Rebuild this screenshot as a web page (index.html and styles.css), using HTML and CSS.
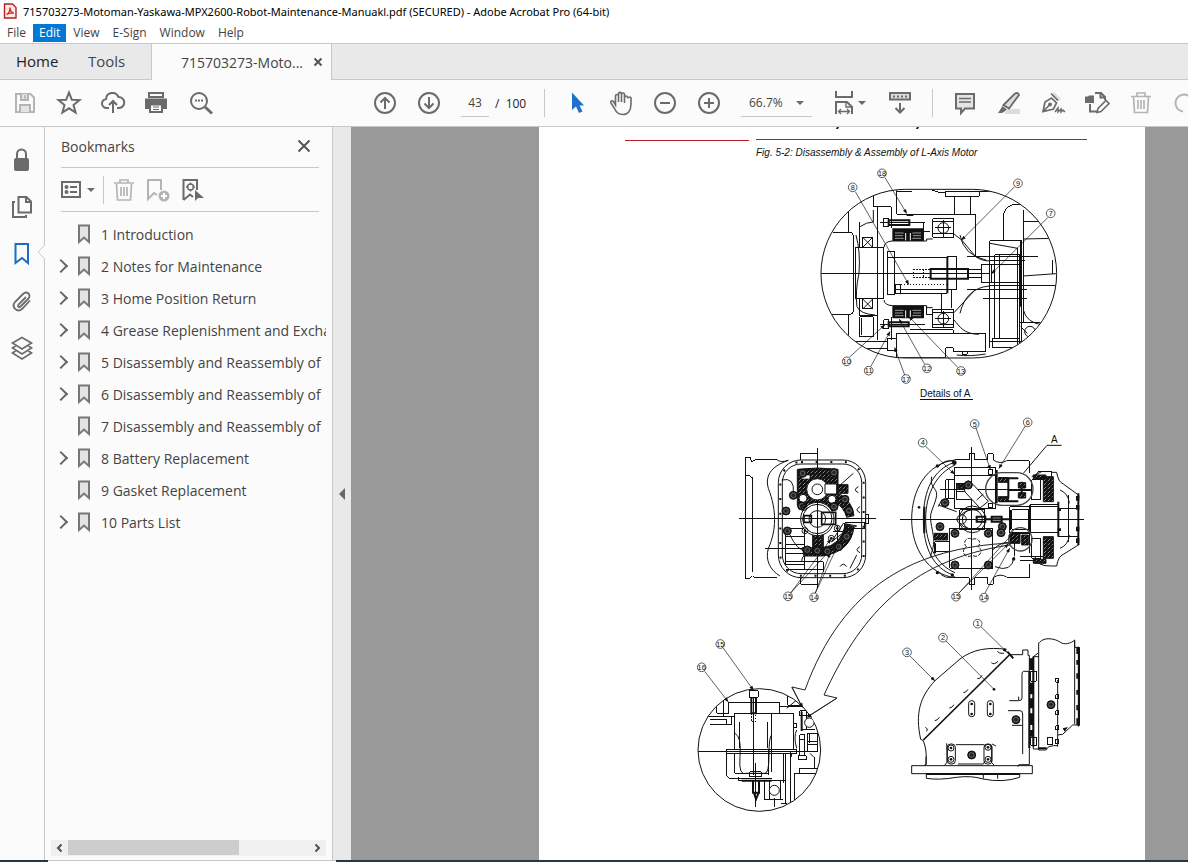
FILE: index.html
```html
<!DOCTYPE html>
<html lang="en">
<head>
<meta charset="utf-8">
<title>715703273-Motoman-Yaskawa-MPX2600-Robot-Maintenance-Manuakl.pdf</title>
<link rel="stylesheet" href="styles.css">
</head>
<body>
<header class="titlebar">
  <svg class="app-icon" viewBox="0 0 14 16" aria-hidden="true"><path d="M1.500 1h8L13 4.500V15H1.500z" fill="#fbe9e7" stroke="#b3261e" stroke-width="1.400"/><path d="M3.500 11.500c2-1 3.500-3.500 3.500-7 .2 3 1.500 5 3.800 5.700-2.500-.5-5 .1-7.300 1.300z" fill="none" stroke="#d0342c" stroke-width="1.400"/></svg>
  <span>715703273-Motoman-Yaskawa-MPX2600-Robot-Maintenance-Manuakl.pdf (SECURED) - Adobe Acrobat Pro (64-bit)</span>
</header>
<nav class="menubar">
  <button>File</button><button class="active">Edit</button><button>View</button><button>E-Sign</button><button>Window</button><button>Help</button>
</nav>
<div class="tabs">
  <button class="tab home">Home</button>
  <button class="tab tools">Tools</button>
  <div class="tab-doc"><span>715703273-Moto...</span><button class="tab-close" aria-label="Close tab"><svg viewBox="0 0 10 10"><path d="M1.500 1.500l7 7M8.500 1.500l-7 7"/></svg></button></div>
</div>
<div class="toolbar">
  <div class="group files">
    <button class="tool dim" aria-label="Save"><svg viewBox="-14 -14 28 28"><path d="M-9-9H5.500L9-5.500V9H-9z"/><path d="M-4-9v6h7v-6M-5 9V2H5v7" fill="#e4e4e4"/><path d="M0-8v4" stroke-width="1.500"/></svg></button>
    <button class="tool" aria-label="Star"><svg viewBox="-14 -14 28 28"><path d="M0-10.500L2.800-3.300 10.500-2.900 4.500 2 6.600 9.500 0 5.300-6.600 9.500-4.500 2-10.500-2.900-2.800-3.300z"/></svg></button>
    <button class="tool" aria-label="Upload"><svg viewBox="-14 -14 28 28"><path d="M-4 5h-2a4.500 4.500 0 0 1-1-9 6.500 6.500 0 0 1 12.500-2A5.500 5.500 0 0 1 6 5H4M0 10V-2M-4 2l4-4 4 4"/></svg></button>
    <button class="tool" aria-label="Print"><svg viewBox="-14 -14 28 28"><path d="M-8-10H6v4H-8z"/><path d="M-11-3.500H9V5H6V1H-8v4h-3z" class="solid"/><path d="M-7 1.500H5V9H-7z" fill="#fff"/><path d="M-4 4h6M-4 6.500h6" stroke-width="1.200"/></svg></button>
    <button class="tool" aria-label="Search"><svg viewBox="-14 -14 28 28"><circle cx="-2" cy="-2" r="8"/><path d="M4 4l7 6.500" stroke-width="3"/><path d="M-6-2.500h2M-3-2.500h2M0-2.500h2" stroke-width="2"/></svg></button>
  </div>
  <div class="group">
    <button class="tool" aria-label="Previous page"><svg viewBox="-14 -14 28 28"><circle r="10"/><path d="M0 6V-5M-4.500-.5L0-5l4.500 4.500"/></svg></button>
    <button class="tool" aria-label="Next page"><svg viewBox="-14 -14 28 28"><circle r="10"/><path d="M0-6V5M-4.500.5L0 5 4.500.5"/></svg></button>
    <input class="page-no" value="43" aria-label="Page number"><span class="page-total">/&nbsp; 100</span>
  </div>
  <i class="sep"></i>
  <div class="group">
    <button class="tool" aria-label="Select"><svg viewBox="-14 -14 28 28"><path d="M-5-10.500V7l4-3.500L2 10l3.500-1.500-3-6H7z" style="fill:#1c73c9;stroke:none"/></svg></button>
    <button class="tool" aria-label="Hand"><svg viewBox="-14 -14 28 28"><path stroke-width="1.600" d="M-5.500 2V-7c0-2 3-2 3 0v6-8c0-2.200 3-2.200 3 0v8-7.500c0-2 3-2 3 0V0-5.500c0-2 2.800-2 3 0 0 1 3-2 3.500.5V1c0 7-3.500 10.500-8 10.500S-5 9-6.500 5.500L-10 0c-1-2 1-3 2.500-1.500z"/></svg></button>
    <button class="tool" aria-label="Zoom out"><svg viewBox="-14 -14 28 28"><circle r="10"/><path d="M-5 0H5"/></svg></button>
    <button class="tool" aria-label="Zoom in"><svg viewBox="-14 -14 28 28"><circle r="10"/><path d="M-5 0H5M0-5V5"/></svg></button>
  </div>
  <div class="zoom"><select aria-label="Zoom level"><option>66.7%</option></select><svg class="caret" viewBox="0 0 8 4"><path d="M0 0h8L4 4z"/></svg></div>
  <div class="group">
    <button class="tool fit" aria-label="Fit width"><svg viewBox="-14 -14 28 28"><path d="M-8-12v6H8v-6M-8 11V-1H3l5 5v7"/><path d="M2-1v5h6M-5 8.500H5M-3 6l-2.500 2.500L-3 11M3 6l2.500 2.500L3 11" stroke-width="1.400"/></svg><svg class="caret" viewBox="0 0 8 4"><path d="M0 0h8L4 4z"/></svg></button>
    <button class="tool" aria-label="Scrolling"><svg viewBox="-14 -14 28 28"><path d="M-10-10H10v6.500H-10z" fill="#ddd"/><path d="M-7-6.500H8" stroke-dasharray="2 2"/><path d="M0 0v9M-4.500 5L0 9.500 4.500 5"/></svg></button>
  </div>
  <i class="sep late"></i>
  <div class="group">
    <button class="tool" aria-label="Comment"><svg viewBox="-14 -14 28 28"><path d="M-9-9H9V5.500H0L-4 10V5.500H-9z" fill="#e4e4e4"/><path d="M-6-4.500H6M-6-1H6" stroke-width="1.300"/></svg></button>
    <button class="tool" aria-label="Highlight"><svg viewBox="-14 -14 28 28"><path d="M-1 6h12v5H-5z" style="fill:#ddd;stroke:none"/><path d="M-5.500 2L6-9.500q3-1.500 4 1.500L0 5.500z" fill="#ddd" stroke-width="1.800"/><path d="M-6.500 3l4.500 3.500-2.500 2-2.500 1.500h-4l2-3z" class="solid" stroke="none"/></svg></button>
    <button class="tool" aria-label="Sign"><svg viewBox="-14 -14 28 28"><path d="M1-11l7 7-3 2-6-6z" style="fill:#ddd;stroke:none"/><path d="M-2-9.500L5-2.500M-10 8.500l2-9.500 6.500-4L3.500 0 .5 6zM-10 8.500l6-6" stroke-width="1.700"/><circle cx="-3" cy="1.500" r="1"/><path d="M2 9l3-4v4l3-3v3l2-2 2 2" stroke-width="1.500"/></svg></button>
    <button class="tool" aria-label="Convert"><svg viewBox="-14 -14 28 28"><path d="M-2-10H4L8-6v3M3.500-10v4.500H8M-7 1V8.500H0"/><path d="M-12-6.500h3l1-1h5V0h-9z" class="solid" stroke="none"/><path d="M0 9.500l1-4L9-2.500l3 3-8 8z" fill="#fff" stroke-width="1.600"/></svg></button>
    <button class="tool dim" aria-label="Delete"><svg viewBox="-14 -14 28 28"><path d="M-7.500-6L-6.500 9.500h13L7.500-6M-10-6.500H10M-4-7v-3H4v3M-3-3V6M0-3V6M3-3V6" stroke-width="1.700"/></svg></button>
    <button class="tool dim" aria-label="Rotate"><svg viewBox="-14 -14 28 28"><path d="M5-6A8.500 8.500 0 1 0-2 8.500"/><path d="M3-1h8v-7z" class="solid" stroke="none"/></svg></button>
  </div>
</div>
<main class="work">
  <aside class="rail">
    <button aria-label="Security"><svg viewBox="-14 -14 28 28"><rect x="-8" y="-2" width="15" height="13" rx="2" class="solid" stroke="none"/><path d="M-5-2v-4a4.500 4.500 0 0 1 9 0v4"/></svg></button>
    <button aria-label="Pages"><svg viewBox="-14 -14 28 28"><path d="M-2-10H4.500L9-5.500V5.500H-3.500V-10zM4-10v5h5M-7-5h-2V10H4V8"/></svg></button>
    <button class="on" aria-label="Bookmarks"><svg viewBox="-14 -14 28 28"><path d="M-6.500-10H6V9L0 4-6.500 9z"/></svg></button>
    <button aria-label="Attachments"><svg viewBox="-14 -14 28 28"><path d="M4-4L-3.500 3.500c-1.500 2 .5 3.500 2 2L6-2c4-4-1-9-5-5l-8 8c-4 5 2 11 7 7L8-.5" stroke-width="1.800"/></svg></button>
    <button aria-label="Layers"><svg viewBox="-14 -14 28 28"><path d="M0-10.500L9.500-5 0 1-9.500-5zM-6-2.500L-9.500 0 0 6 9.500 0 6-2.500M-6 2.500L-9.500 5 0 11 9.500 5 6 2.500" stroke-width="1.700"/></svg></button>
    <svg class="pointer" viewBox="0 0 8 14"><path d="M8 0L1 7l7 7"/></svg>
  </aside>
  <section class="panel">
    <div class="panel-head"><h2>Bookmarks</h2><button aria-label="Close panel"><svg viewBox="0 0 14 14"><path d="M1.500 1.500l11 11M12.500 1.500l-11 11"/></svg></button></div>
    <div class="panel-tools">
      <button class="opts" aria-label="Options"><svg viewBox="0 0 20 18"><path d="M1 1h18v15H1z"/><path d="M9 6h7M9 11h7"/><circle cx="5.500" cy="6" r="1"/><circle cx="5.500" cy="11" r="1"/></svg><svg class="caret" viewBox="0 0 8 4"><path d="M0 0h8L4 4z"/></svg></button>
      <i></i>
      <button class="dim" aria-label="Delete bookmark"><svg viewBox="-14 -14 28 28"><path d="M-7.500-6L-6.500 10h13L7.500-6M-10-7H10M-4-7v-3H4v3M-3-3V6M0-3V6M3-3V6" stroke-width="1.700"/></svg></button>
      <button class="dim" aria-label="New bookmark"><svg viewBox="-14 -14 28 28"><path d="M-1 5L-4 3l-6 6V-10H3V0"/><circle cx="6" cy="6" r="5.500" class="solid" stroke="none"/><path d="M6 3v6M3 6h6" style="stroke:#fff"/></svg></button>
      <button aria-label="Find bookmark"><svg viewBox="-14 -14 28 28"><path d="M-8.500 10V-10H5V0M-8.500 10L-2 4.500 1 7"/><circle cx="-1.500" cy="-3" r="3" stroke-width="1.400"/><path d="M-1.500-7.500V-5M-1.500-1V1.500M-6-3h2.500M.5-3H3" stroke-width="1.400"/><path d="M3 0v11l3-3h6z" class="solid" stroke="none"/></svg></button>
    </div>
    <ul class="list">
      <li><span class="tw"></span><svg class="bm" viewBox="0 0 14 20"><path d="M2 1.500h10V18l-5-4.500L2 18z"/></svg><a href="#">1 Introduction</a></li>
      <li><button class="tw" aria-label="Expand"></button><svg class="bm" viewBox="0 0 14 20"><path d="M2 1.500h10V18l-5-4.500L2 18z"/></svg><a href="#">2 Notes for Maintenance</a></li>
      <li><button class="tw" aria-label="Expand"></button><svg class="bm" viewBox="0 0 14 20"><path d="M2 1.500h10V18l-5-4.500L2 18z"/></svg><a href="#">3 Home Position Return</a></li>
      <li><button class="tw" aria-label="Expand"></button><svg class="bm" viewBox="0 0 14 20"><path d="M2 1.500h10V18l-5-4.500L2 18z"/></svg><a href="#">4 Grease Replenishment and Excha</a></li>
      <li><button class="tw" aria-label="Expand"></button><svg class="bm" viewBox="0 0 14 20"><path d="M2 1.500h10V18l-5-4.500L2 18z"/></svg><a href="#">5 Disassembly and Reassembly of</a></li>
      <li><button class="tw" aria-label="Expand"></button><svg class="bm" viewBox="0 0 14 20"><path d="M2 1.500h10V18l-5-4.500L2 18z"/></svg><a href="#">6 Disassembly and Reassembly of</a></li>
      <li><span class="tw"></span><svg class="bm" viewBox="0 0 14 20"><path d="M2 1.500h10V18l-5-4.500L2 18z"/></svg><a href="#">7 Disassembly and Reassembly of</a></li>
      <li><button class="tw" aria-label="Expand"></button><svg class="bm" viewBox="0 0 14 20"><path d="M2 1.500h10V18l-5-4.500L2 18z"/></svg><a href="#">8 Battery Replacement</a></li>
      <li><span class="tw"></span><svg class="bm" viewBox="0 0 14 20"><path d="M2 1.500h10V18l-5-4.500L2 18z"/></svg><a href="#">9 Gasket Replacement</a></li>
      <li><button class="tw" aria-label="Expand"></button><svg class="bm" viewBox="0 0 14 20"><path d="M2 1.500h10V18l-5-4.500L2 18z"/></svg><a href="#">10 Parts List</a></li>
    </ul>
    <div class="hscroll"><svg viewBox="0 0 16 16"><path d="M10 4.500L6.500 8l3.500 3.500"/></svg><div class="track"><div class="thumb"></div></div><svg viewBox="0 0 16 16"><path d="M6 4.500L9.500 8 6 11.500"/></svg></div>
  </section>
  <button class="gutter" aria-label="Collapse panel"><svg viewBox="0 0 6 12"><path d="M6 0v12L0 6z"/></svg></button>
  <div class="canvas">
    <article class="sheet">
      <svg class="drawing" viewBox="539 127 606 733" role="img" aria-label="Disassembly and assembly of L-axis motor">
        <defs>
          <marker id="ar" viewBox="0 0 10 8" refX="9" refY="4" markerWidth="15" markerHeight="11" markerUnits="userSpaceOnUse" orient="auto"><path d="M0 0L10 4 0 8z" fill="#111" stroke="none"/></marker>
          <pattern id="hatch" width="12" height="12" patternUnits="userSpaceOnUse"><rect width="12" height="12" fill="#111"/><path d="M2 10L10 2" stroke="#bbb" stroke-width="2"/></pattern>
          <g id="bolt"><circle r="12" fill="#222"/><circle r="7" fill="none" stroke="#888" stroke-width="2"/><circle r="2" fill="#ccc"/></g>
          <g id="ring"><circle r="9"/><circle r="4" class="k"/></g>
          <g id="bearing"><path class="o" d="M0 0h64v56H0zM0 10h64M0 46h64M32 4v50M8 28h48"/><circle cx="32" cy="28" r="16"/></g>
          <g id="seal"><path d="M0 0h95v38H0z" class="k"/><path d="M8 14h26M8 22h24M8 30h26M60 14h26M62 22h24M60 30h26" stroke="#999"/><path d="M40 14v22M54 14v22" stroke="#fff"/></g>
          <clipPath id="ca"><rect x="34" y="89" width="705" height="504" rx="252"/></clipPath>
          <clipPath id="cb"><circle cx="208" cy="420" r="184"/></clipPath>
        </defs>
        <path class="rule" d="M625 140.500h124M756 139.500h331"/>
        <path class="k" d="M837 127h2l-1 2h-2zM917 127h2l-1 2h-2z"/>
        <text class="caption" x="756" y="156">Fig. 5-2: Disassembly &amp; Assembly of L-Axis Motor</text>

        <g transform="translate(810 160) scale(.333333)">
          <rect x="33" y="88" width="707" height="506" rx="253"/>
          <g clip-path="url(#ca)">
            <path class="o" d="M33 341H540M68 217h52q10 0 10 10v228q0 8-10 8H60M116 100v117M116 463v90M190 90v50h54v65M204 140v400M260 88v75h237v127M260 95h45M222 175h14v26h-14zM210 187h135M406 95h102v14H406zM434 109v54M482 109v54M365 90l22 7h19M508 95h60M158 232h30v30h-30zM138 262h84v155h-84zM158 417h30v30h-30zM150 470h40v60h-40zM155 475v50M150 262v-75M150 417v50h54M232 275h22v130h-22zM232 293h180M254 400h158M254 388h158M412 290h28v100h-28zM258 375h14v25h-14zM395 400v60M424 390v55M474 329h40v24h-40zM514 315h30v52h-30zM470 290h215M470 390h180M536 303h110M536 378h110M540 243h95v320h-8M540 243v320M555 285h75v250h-75zM570 285v250M544 313h90v54h-90zM623 265v300M640 150v340M632 240v160M640 185h90M640 377h98M728 300v41M580 243v-68q0-42 40-42h80M520 415h130M548 535h82v28h-82zM536 545h105M628 488h100M628 488v90M260 520h267v55h-97v-12h-23v31M244 470v70M260 520v80M120 545h113M120 565h113M233 535h26v38h-26zM222 480h14v26h-14zM210 493h135M300 510h130v10M457 575v8h15v-8M300 165h50M340 187v28h20M350 437v28h20M270 592h134"/>
            <path d="M158 232l30 30m0-30l-30 30M158 417l30 30m0-30l-30 30M150 200q20-14 40-14V150M138 225q14 50 9 115-12 55-6 100 10 22 54 25M222 262q2-18 25-19h103v-6h18M222 420q2 16 25 17h103v6h18M432 222l23 18 42 50q18 13 43 13M450 225q10 60 80 76M450 460q18-76 88-82M432 458l63-68M540 250l83 15M640 237l90-2M640 348l98-7M432 480c18 20 28 42 75 43M440 585q40 5 87-3M640 450q10 40 60 45M632 500l20 20"/>
            <circle cx="660" cy="515" r="16"/>
            <path class="b" d="M236 181h62v14h-62zM236 487h60v12h-60zM362 327h112v29H362zM412 290v110M290 165h20M632 300v140"/>
            <path class="o" stroke-dasharray="5 4" d="M254 375h156M310 328h52v26h-52zM340 328v26"/>
            <use href="#bearing" x="368" y="176"/><use href="#bearing" x="368" y="448"/>
            <use href="#seal" x="247" y="205"/><use href="#seal" x="247" y="437"/>
          </g>
          <g class="lead"><path d="M225 53L290 160"/><path d="M136 95L296 373"/><path d="M614 80L455 240"/><path d="M714 172L545 341"/><path d="M118 592L224 495"/><path d="M182 620L240 515"/><path d="M284 645L254 563"/><path d="M344 613L268 478"/><path d="M443 622L297 470"/></g>
          <g class="call"><circle cx="216" cy="40" r="13"/><circle cx="128" cy="82" r="13"/><circle cx="624" cy="70" r="13"/><circle cx="722" cy="160" r="13"/><circle cx="110" cy="604" r="13"/><circle cx="176" cy="632" r="13"/><circle cx="288" cy="657" r="13"/><circle cx="351" cy="625" r="13"/><circle cx="453" cy="633" r="13"/></g>
          <g class="num"><text x="216" y="48">18</text><text x="128" y="90">8</text><text x="624" y="78">9</text><text x="722" y="168">7</text><text x="110" y="612">10</text><text x="176" y="640">11</text><text x="288" y="665">17</text><text x="351" y="633">12</text><text x="453" y="641">13</text></g>
          <text class="label" x="330" y="712">Details of A</text><path class="o" d="M330 718h158"/>
        </g>

        <g transform="translate(730 410) scale(.333333)">
          <path class="o" d="M28 327h410M105 417h120M262 115v420M46 142v363M212 150v-20h50M212 503v20h50M406 313h10v27h-10zM46 142h14l6 14 9-7h66M46 198h14q8 2 8 12v275M46 505h14l8-8 8 6h64M167 355h56v110h-56zM167 380h56M167 405h56M167 430h56M167 455h113M167 480h113M223 340v140M280 455v30"/>
          <path d="M141 149q10 10 34 2C120 170 105 200 115 235c25 65 25 125 0 180-10 35 5 65 35 83"/>
          <rect x="145" y="150" width="262" height="353" rx="68"/><rect x="157" y="162" width="238" height="329" rx="56"/><rect x="151" y="156" width="250" height="341" rx="62" stroke-dasharray="6 38" stroke-width="6"/>
          <path d="M155 210q40-10 35 40M370 190l-45 40M215 455q0-25 30-25M180 375q20 45 50 50M385 230q-18 10 0 18M390 290q-18 10 0 18M390 410q-18 10 0 18M330 470q10-15 20 0M360 475l20-40"/>
          <path fill="url(#hatch)" d="M202 178q60-8 122 0v46h30v26h-28v35l-20 18h-86l-18-18z"/>
          <circle cx="262" cy="238" r="32" class="w"/><path class="w" d="M285 222h35v30h-35z"/><circle cx="262" cy="238" r="16"/><circle cx="219" cy="265" r="12" class="w"/><circle cx="306" cy="268" r="12" class="w"/>
          <path class="w" d="M215 195h25v12h-25zM282 192l18 12" stroke-width="2"/>
          <path fill="url(#hatch)" d="M330 252q38 25 42 65l-22 5q-8-30-34-45zM372 350q-8 75-95 88h-55l-5-25h60q55-5 70-70zM248 355h32v75h-32z"/>
          <circle cx="262" cy="327" r="50" class="w"/><circle cx="262" cy="327" r="44"/><circle cx="262" cy="327" r="25"/><path d="M222 317h22v20h-22zM275 307h42v36h-42z" stroke-width="5"/><path class="o" d="M212 327h120M262 270v130M345 338h60v18h-60zM310 365h40M322 345v70"/>
          <path d="M305 395L340 340l40 8-40 20z"/>
          <use href="#bolt" x="218" y="190"/><use href="#bolt" x="312" y="188"/><use href="#bolt" x="190" y="256"/><use href="#bolt" x="168" y="303"/><use href="#bolt" x="172" y="363"/><use href="#bolt" x="345" y="268"/><use href="#bolt" x="357" y="302"/><use href="#bolt" x="232" y="420"/><use href="#bolt" x="262" y="422"/><use href="#bolt" x="292" y="424"/><use href="#bolt" x="326" y="410"/><use href="#bolt" x="350" y="380"/><use href="#bolt" x="215" y="288"/><use href="#bolt" x="312" y="290"/>
          <use href="#ring" x="322" y="355"/><use href="#ring" x="304" y="385"/><use href="#ring" x="225" y="362"/><use href="#ring" x="222" y="292"/>
          <g class="lead"><path d="M182 549L322 397"/><path d="M182 549L302 388"/><path d="M256 549L300 430"/><path d="M256 549L352 346"/></g>
          <g class="call"><circle cx="174" cy="559" r="13"/><circle cx="252" cy="562" r="13"/></g>
          <g class="num"><text x="174" y="567">15</text><text x="252" y="570">14</text></g>
        </g>

        <g transform="translate(895 410) scale(.333333)">
          <path class="o" d="M15 328h552M230 110v430M178 172h125v125H178zM178 198h125M152 210h26v55h-26zM135 238h270M160 210v55M180 150h43v-18h16v18h40v-18h16v18M335 152h68v38M180 503h43v20h16v-20h40v20h16v-20M335 503h68v-40M185 220h45v50h-45zM185 245h45M280 178h14v16h-14zM280 282h14v12h-14zM345 290h145v78H345zM350 300h52v58h-52zM405 285h85M345 370h60v60M430 185h40v25h-40M490 275v105M493 295h60M493 380h60M522 255v140M165 355h128v120H165zM195 300h75v60h-75zM360 368v70M375 440h70v12h-70M410 210h28v60h-28zM410 385h28v60h-28zM120 395h45v30h-45z"/>
          <path d="M180 150C95 160 50 240 50 328s50 165 130 175M175 158C115 180 85 240 85 328s32 148 90 167M180 165C125 190 92 250 92 328s35 138 88 160M110 200c-8 40 25 30 12 70s-20 40-12 80 10 50-4 90M295 150q20 14 40 2M295 503q20-14 40-2M130 170q20-25 50-15M130 485q20 25 50 15M470 187h15q5 30 20 35l48 35M470 468h15q5-30 20-35l48-30M495 240q25 10 28 40M495 415q25-10 28-40M430 185q-10 10-10 25M420 440q5 30 50 28M130 285l55 20M140 270l-10 20M195 320q15-25 55-20M195 340q15 20 55 18M293 420q30-30 55-20M300 470q50 20 58-30M410 200q30-15 30-15"/>
          <path class="w" d="M205 222l15-10 15 12 45 50-25 20-45-48zM245 270l20-18"/>
          <circle cx="232" cy="328" r="40"/><circle cx="232" cy="328" r="30"/><circle cx="200" cy="328" r="14"/><path d="M232 388c18-8 30 12 16 22 22 10 4 38-16 26-20 12-38-12-18-26-12-12 0-32 18-22z" stroke-dasharray="12 4"/>
          <path class="b" d="M245 320h26v15h-26zM290 320h30v15h-30zM270 328h75M345 300v60M305 180v100M312 205h58M312 274h58M340 240h70M340 205v60M380 215v50M88 290v80M550 250v155M490 275v105M405 285v85M120 400v30"/>
          <path fill="url(#hatch)" d="M445 200h30v75h-30zM445 380h30v65h-30zM370 218h22v16h-22zM370 248h22v16h-22zM345 370h30v30h-30zM380 375h20v30h-20zM310 203h30v14h-30zM310 260h30v14h-30zM188 222h28v14h-28zM415 195h38v12h-38zM415 448h38v12h-38zM118 370h40v20h-40z"/>
          <rect x="272" y="188" width="142" height="98" rx="49" class="lead2"/>
          <use href="#bolt" x="150" y="278"/><use href="#bolt" x="135" y="350"/><use href="#bolt" x="322" y="350"/><use href="#bolt" x="318" y="368"/><use href="#bolt" x="180" y="370"/><use href="#bolt" x="280" y="370"/><use href="#bolt" x="180" y="465"/><use href="#bolt" x="280" y="465"/><use href="#bolt" x="220" y="225"/>
          <g class="k"><circle cx="178" cy="158" r="7"/><circle cx="127" cy="168" r="5"/><circle cx="72" cy="292" r="4"/><circle cx="127" cy="488" r="5"/><circle cx="172" cy="495" r="5"/><circle cx="356" cy="447" r="5"/><path d="M543 258h10v14h-10zM543 285h10v14h-10zM543 350h10v14h-10zM543 385h10v14h-10zM488 295h10v8h-10zM488 355h10v8h-10z"/></g>
          <circle cx="376" cy="388" r="35" class="lead2"/>
          <path d="M500 106h-44L385 190"/>
          <g class="lead"><path d="M92 109L178 192"/><path d="M243 54L286 178"/><path d="M391 48L312 175"/><path d="M192 549L340 402"/><path d="M192 549L352 372"/><path d="M270 549L344 415"/></g>
          <g class="call"><circle cx="83" cy="98" r="13"/><circle cx="239" cy="42" r="13"/><circle cx="398" cy="37" r="13"/><circle cx="183" cy="560" r="13"/><circle cx="267" cy="563" r="13"/></g>
          <g class="num"><text x="83" y="106">4</text><text x="239" y="50">5</text><text x="398" y="45">6</text><text x="183" y="568">15</text><text x="267" y="571">14</text></g>
          <text class="label" x="468" y="99">A</text>
        </g>

        <path class="arrow" d="M1010 543C915 548 843 585 805 690L792 687 807 717 837 698 824 695C858 621 905 560 1010 545"/>

        <g transform="translate(690 610) scale(.333333)">
          <circle cx="208" cy="420" r="184" class="w"/>
          <g clip-path="url(#cb)">
            <path class="o" d="M25 424h280M80 277v33M100 265v55M116 277h152v33M116 277v33H80M100 320h35v-10M125 320v25H60M60 328h50v15M40 320h60M135 310h110v5M135 310v108M150 335v80M190 275v220M245 310h66v108M245 310v175M232 335v80M293 258v28h50M268 290h75M110 418h210v12H110zM110 418v75q0 12 15 12h120M135 430v60h60M280 430v88M287 430v150M303 424v156M303 424h80M311 340h9v14h-9zM335 300v60h40M350 300v60M330 303h25v15h-25zM330 374h14v64h-14zM328 390h18M325 438h24v12h-24zM353 370h30v54h-30zM353 395h30M353 405h30M360 370v30M222 512h65M224 512v58h55M240 512v58M272 512v58M272 580h18M330 490v-15h50M313 490h70M313 490v90M373 440v35M145 500v12h50M180 485h34v15h-34zM197 460v130M190 240v95M155 490h80M237 420v75M253 565v25"/>
            <path d="M135 370q20 10 15 70t20 50h55q12 0 12-55t8-60M290 295l30-25M320 360q-10 20 0 55M360 430l12 12"/>
            <path class="b" d="M184 262h14v48h-14zM189 512h18v36h-18zM192 548l6 20 8-20M155 512h90M335 305v58M303 430v10"/>
            <path class="o" d="M178 243h27v19h-27z" fill="#fff"/><path class="o" stroke-dasharray="5 4" d="M184 310h14v24h-14z"/>
            <circle cx="253" cy="541" r="15" class="w"/><circle cx="358" cy="338" r="14" class="w"/>
          </g>
          <g class="lead"><path d="M99 113L190 240"/><path d="M44 184L114 275"/><path d="M440 265L352 322"/><path d="M305 232L338 292"/></g>
          <g class="call"><circle cx="91" cy="102" r="13"/><circle cx="35" cy="172" r="13"/></g>
          <g class="num"><text x="91" y="110">15</text><text x="35" y="180">16</text></g>
        </g>

        <g transform="translate(890 610) scale(.333333)">
          <path d="M92 388C75 310 90 260 135 212l75-65c40-30 85-36 140-29M92 388l8 4q12 30 8 74M108 440v22l-6 5M362 134h36v-14h16v16h4v328h-26q-8-2-8 6M65 467h362v24H65zM109 491v14q40 6 90-3 45-6 80 5 60 12 110-5v-11M280 491v15M323 491v15M418 184h-18q-4 0-4 10v70q0 8-10 8h-28M354 302h36q8 0 8 10v120M366 346h30M170 400q2 50 0 58l-6 8M305 408v50l8 8M198 404h85M204 462h75q4 0 4-8M386 260v10M448 98c15-20 50-10 60-3 15 12 35 5 46-5v22h10M446 98v30l-16 12v277h16M446 128v292h22l8-10 15-3h12M503 210v200M430 140h16M554 92v250M503 375l15-2 30-28h18M565 110v240M318 408l-12-6"/>
          <rect x="236" y="272" width="18" height="48" rx="8"/><rect x="292" y="272" width="18" height="48" rx="8"/><rect x="172" y="402" width="24" height="60" rx="10"/><rect x="282" y="402" width="24" height="60" rx="10"/>
          <path class="o" d="M423 184h16v30h-16zM422 382h18v24h-18zM472 382h16v22h-16zM498 205h9v12h-9zM498 254h9v12h-9zM498 303h9v12h-9zM498 347h9v12h-9zM498 388h9v14h-9z"/>
          <path d="M100 390L358 135" stroke-width="5"/>
          <path class="b" d="M352 125l18 20M418 184v230M430 140v270M567 112v235M109 492h280M444 415h26"/>
          <path d="M322 124q5 8 20 6M304 158q8 8 20-4M262 206q8 2 14-10M220 248q8 0 14-10M178 294q8 0 14-10M134 332q8 0 14-10M106 352q10 4 4 12"/>
          <g class="k"><path d="M418 145h12v35h-12zM420 218h11v35h-11zM420 265h11v30h-11zM420 310h11v35h-11zM420 360h11v20h-11zM559 112h10v20h-10zM559 150h10v14h-10zM559 190h10v16h-10zM559 240h10v14h-10zM559 285h10v16h-10zM559 325h10v20h-10zM518 355l16-4-10 14z"/><circle cx="312" cy="238" r="4"/></g>
          <use href="#bolt" x="378" y="329"/><use href="#bolt" x="483" y="284"/><use href="#bolt" x="245" y="435"/>
          <use href="#ring" x="183" y="414"/><use href="#ring" x="183" y="448"/><use href="#ring" x="294" y="412"/><use href="#ring" x="294" y="448"/>
          <g class="k"><circle cx="245" cy="282" r="4"/><circle cx="245" cy="312" r="4"/><circle cx="301" cy="282" r="4"/><circle cx="301" cy="312" r="4"/></g>
          <g class="lead"><path d="M273 50L350 126"/><path d="M60 138L134 212"/></g><path d="M168 93L312 238" stroke-width="2"/>
          <g class="call"><circle cx="263" cy="41" r="13"/><circle cx="159" cy="83" r="13"/><circle cx="51" cy="127" r="13"/></g>
          <g class="num"><text x="263" y="49">1</text><text x="159" y="91">2</text><text x="51" y="135">3</text></g>
        </g>
      </svg>
    </article>
  </div>
</main>
<footer class="edge"><span></span></footer>
</body>
</html>
```
FILE: styles.css
```css
* { box-sizing: border-box; }
body {
  margin: 0;
  height: 100vh;
  display: flex;
  flex-direction: column;
  overflow: hidden;
  background: #fbfbfb;
  color: #444;
  font-family: "Open Sans", "Noto Sans", sans-serif;
  font-size: 14px;
}
button {
  margin: 0;
  padding: 0;
  border: 0;
  background: none;
  color: inherit;
  font: inherit;
}
svg { display: block; flex: none; }
.titlebar {
  display: flex;
  align-items: center;
  gap: 6px;
  height: 24px;
  padding: 0 0 2px 3px;
  background: #fff;
  color: #000;
  font-family: "Noto Sans", sans-serif;
  font-size: 11px;
  white-space: nowrap;
}
.app-icon { width: 14px; height: 16px; }
.menubar { display: flex; gap: 1px; height: 19px; padding: 0 0 1px 1px; background: #fff; font-size: 12px; }
.menubar button { padding: 0 6px; line-height: 18px; }
.menubar .active { background: #0078d7; color: #fff; }
.tabs {
  display: flex;
  height: 37px;
  border-top: 1px solid #c8c8c8;
  border-bottom: 1px solid #c8c8c8;
  background: #e9e9e9;
}
.tab { text-align: left; padding: 0 0 2px 16px; font-size: 15px; }
.home { width: 72px; color: #222; }
.tools { width: 79px; }
.tab-doc {
  display: flex;
  align-items: center;
  justify-content: space-between;
  width: 181px;
  height: 36px;
  padding: 0 8px 0 29px;
  border: solid #c8c8c8;
  border-width: 0 1px;
  background: #fbfbfb;
}
.tab-close svg { width: 10px; height: 10px; stroke: #555; stroke-width: 2; }
.toolbar {
  display: flex;
  align-items: center;
  flex: none;
  height: 47px;
  padding-left: 3px;
  border-bottom: 1px solid #c8c8c8;
  overflow: hidden;
}
.group { display: flex; align-items: center; flex: none; }
.files { margin-right: 140px; }
.tool { display: flex; align-items: center; justify-content: center; width: 44px; height: 44px; }
.tool svg, .rail button svg, .panel-tools button svg { width: 28px; height: 28px; fill: none; stroke: #6b6b6b; stroke-width: 2; }
.dim svg { stroke: #b4b4b4 !important; }
.solid { fill: #6b6b6b; }
.dim .solid { fill: #b4b4b4; }
.toolbar .caret, .panel-tools button .caret { width: 8px; height: 4px; fill: #6b6b6b; stroke: none; }
.fit { width: 56px; justify-content: flex-start; padding-left: 8px; gap: 0; }
.page-no {
  width: 28px;
  height: 28px;
  margin: 0 6px 0 10px;
  padding: 0;
  border: 0;
  border-bottom: 1px solid #c8c8c8;
  background: none;
  color: #444;
  text-align: center;
  font: 12px "Open Sans", sans-serif;
}
.page-total { width: 49px; color: #222; font-size: 12px; white-space: nowrap; }
.sep { flex: none; width: 1px; height: 28px; margin-right: 10px; background: #c8c8c8; }
.late { margin-left: 10px; }
.zoom {
  display: flex;
  align-items: center;
  flex: none;
  width: 71px;
  height: 28px;
  margin: 0 10px;
  border-bottom: 1px solid #c8c8c8;
}
.zoom select {
  appearance: none;
  width: 55px;
  height: 28px;
  padding: 0 0 0 8px;
  border: 0;
  background: none;
  color: #444;
  font: 12px "Open Sans", sans-serif;
}
.work { display: flex; flex: 1; min-height: 0; }
.rail {
  position: relative;
  display: flex;
  flex-direction: column;
  flex: none;
  width: 45px;
  padding: 9px 1px 0 0;
  border-right: 1px solid #c8c8c8;
}
.rail button { display: flex; align-items: center; justify-content: center; width: 44px; height: 47px; }
.rail .on svg { stroke: #1c6fc0; }
.pointer { position: absolute; right: -1px; top: 118px; width: 8px; height: 14px; fill: #fbfbfb; stroke: #c8c8c8; }
.panel {
  display: flex;
  flex-direction: column;
  flex: none;
  width: 288px;
  padding: 0 6px 4px;
  border-right: 1px solid #c8c8c8;
}
.panel-head, .panel-tools { display: flex; align-items: center; margin: 0 7px 0 10px; border-bottom: 1px solid #c8c8c8; }
.panel-head { height: 41px; justify-content: space-between; padding: 0 8px 2px 0; }
.panel-head h2 { margin: 0; font-size: 14px; font-weight: 400; }
.panel-head svg { width: 14px; height: 14px; stroke: #555; stroke-width: 2; }
.panel-tools { height: 44px; }
.panel-tools button { width: 34px; display: flex; align-items: center; justify-content: center; }
.panel-tools i { width: 1px; height: 28px; margin-right: 3px; background: #c8c8c8; }
.panel-tools .opts { width: 42px; justify-content: flex-start; gap: 6px; }
.panel-tools .opts svg:first-child { width: 20px; height: 18px; }
.list { flex: 1; margin: 0; padding: 6px 0 0; list-style: none; overflow: hidden; }
.list li { display: flex; align-items: center; height: 32px; white-space: nowrap; }
.list a { color: #444; text-decoration: none; }
.tw { flex: none; width: 26px; height: 32px; padding-left: 5px; }
button.tw::before {
  content: "";
  display: block;
  width: 8px;
  height: 8px;
  border: solid #666;
  border-width: 2px 2px 0 0;
  transform: rotate(45deg);
}
.bm { width: 14px; height: 20px; margin-right: 10px; fill: #e4e4e4; stroke: #777; stroke-width: 2; }
.hscroll { display: flex; height: 16px; background: #f0f0f0; }
.hscroll svg { width: 17px; height: 16px; fill: none; stroke: #505050; stroke-width: 2; }
.track { flex: 1; }
.thumb { width: 71%; height: 15px; background: #cdcdcd; }
.gutter { display: flex; align-items: center; justify-content: center; flex: none; width: 18px; background: #e9e9e9; }
.gutter svg { width: 6px; height: 12px; fill: #666; }
.canvas { flex: 1; min-width: 0; padding-left: 188px; overflow: hidden; background: #999; }
.sheet { width: 606px; height: 100%; background: #fff; overflow: hidden; }
.drawing { width: 606px; fill: none; stroke: #111; stroke-width: 3; }
.drawing text { fill: #111; stroke: none; font-family: "Liberation Sans", Arial, sans-serif; }
.caption { font-size: 10px; font-style: italic; }
.label { font-size: 30px; }
.num text { font-size: 22px; text-anchor: middle; }
.rule { stroke: #b81f26; stroke-width: 1; shape-rendering: crispEdges; }
.arrow { stroke: #222; stroke-width: 1; }
.o { shape-rendering: crispEdges; }
.b { stroke-width: 6; }
.k { fill: #111; stroke: none; }
.w { fill: #fff; }
.lead path { marker-end: url(#ar); stroke-width: 2; }
.lead2 { stroke-width: 4; stroke: #444; }
.call circle { fill: #fff; stroke-width: 2; }
.edge { height: 2px; flex: none; background: #263746; }
.edge span { display: block; width: 288px; height: 2px; margin-left: 48px; border-top: 1px solid #c8c8c8; background: #fbfbfb; }
```
